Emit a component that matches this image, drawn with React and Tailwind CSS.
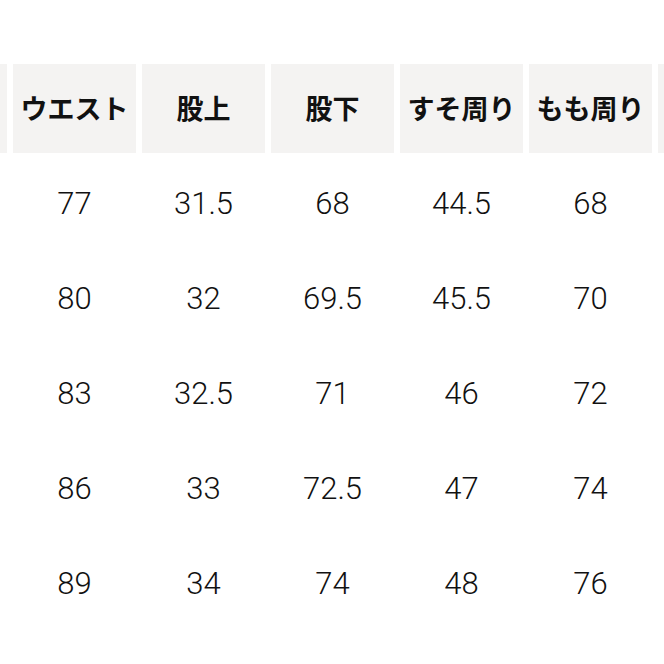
import React from 'react';

const headers = ['', 'ウエスト', '股上', '股下', 'すそ周り', 'もも周り', ''];

const rows = [
  ['77', '31.5', '68', '44.5', '68'],
  ['80', '32', '69.5', '45.5', '70'],
  ['83', '32.5', '71', '46', '72'],
  ['86', '33', '72.5', '47', '74'],
  ['89', '34', '74', '48', '76'],
];

const App = () => {
  return (
    <div className="w-[664px] h-[664px] overflow-hidden bg-white pt-[64px]">
      <div className="ml-[-116px] grid grid-cols-[repeat(7,123px)] gap-x-[6px]">
        {headers.map((h, i) => (
          <div
            key={`h-${i}`}
            className="h-[89px] bg-[#f4f3f2] flex items-center justify-center text-[27px] font-bold text-[#111] font-['Noto_Sans_CJK_JP',sans-serif] whitespace-nowrap"
          >
            {h}
          </div>
        ))}
        {rows.map((row, r) => (
          <React.Fragment key={`r-${r}`}>
            <div className={r === 0 ? 'h-[95px] mt-[4px]' : 'h-[95px]'} />
            {row.map((v, c) => (
              <div
                key={`c-${r}-${c}`}
                className={`${r === 0 ? 'mt-[4px] ' : ''}h-[95px] flex items-center justify-center text-[31px] font-light text-[#111] font-['Roboto',sans-serif]`}
              >
                {v}
              </div>
            ))}
            <div className={r === 0 ? 'h-[95px] mt-[4px]' : 'h-[95px]'} />
          </React.Fragment>
        ))}
      </div>
    </div>
  );
};

export default App;
